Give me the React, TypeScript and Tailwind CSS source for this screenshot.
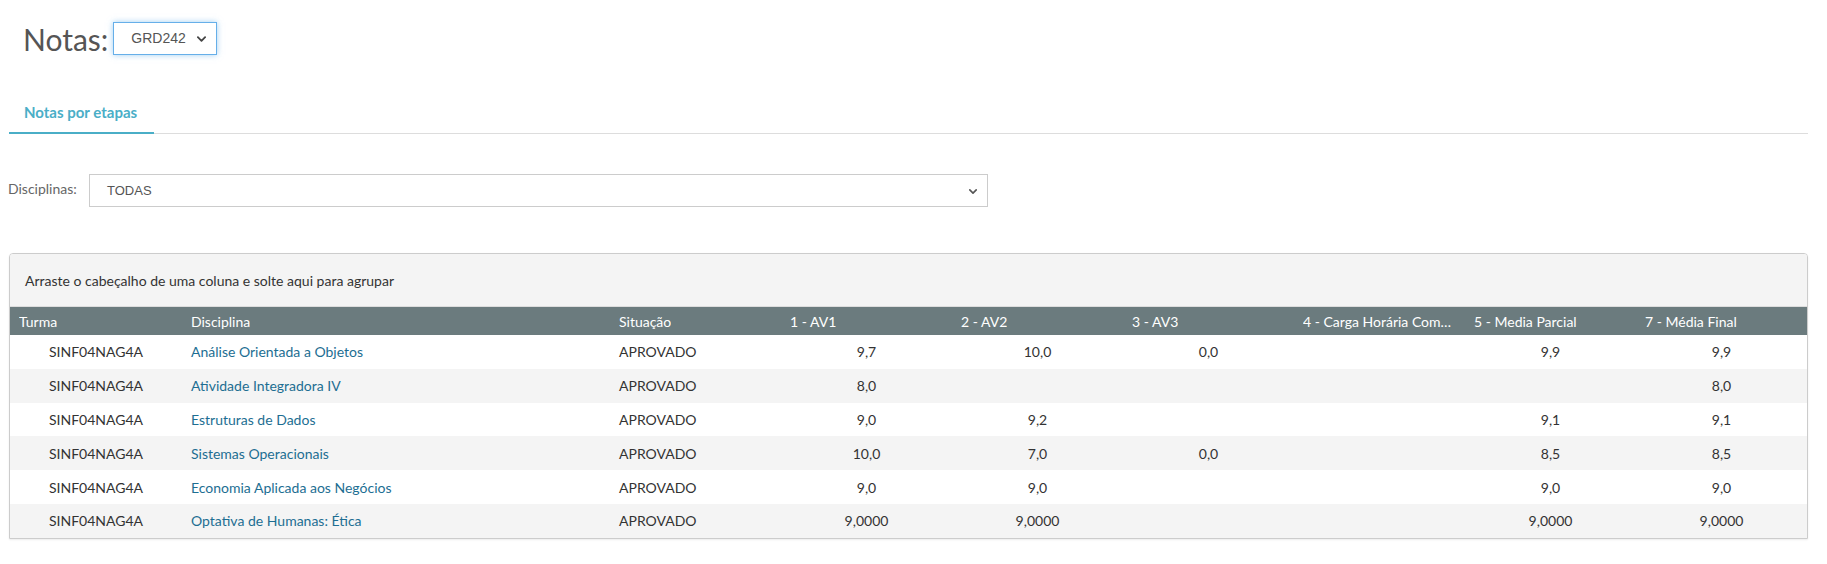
import React from "react";

const rows = [
  { turma: "SINF04NAG4A", disciplina: "Análise Orientada a Objetos", situacao: "APROVADO", av1: "9,7", av2: "10,0", av3: "0,0", carga: "", parcial: "9,9", final: "9,9" },
  { turma: "SINF04NAG4A", disciplina: "Atividade Integradora IV", situacao: "APROVADO", av1: "8,0", av2: "", av3: "", carga: "", parcial: "", final: "8,0" },
  { turma: "SINF04NAG4A", disciplina: "Estruturas de Dados", situacao: "APROVADO", av1: "9,0", av2: "9,2", av3: "", carga: "", parcial: "9,1", final: "9,1" },
  { turma: "SINF04NAG4A", disciplina: "Sistemas Operacionais", situacao: "APROVADO", av1: "10,0", av2: "7,0", av3: "0,0", carga: "", parcial: "8,5", final: "8,5" },
  { turma: "SINF04NAG4A", disciplina: "Economia Aplicada aos Negócios", situacao: "APROVADO", av1: "9,0", av2: "9,0", av3: "", carga: "", parcial: "9,0", final: "9,0" },
  { turma: "SINF04NAG4A", disciplina: "Optativa de Humanas: Ética", situacao: "APROVADO", av1: "9,0000", av2: "9,0000", av3: "", carga: "", parcial: "9,0000", final: "9,0000" },
];

const headers = [
  "Turma",
  "Disciplina",
  "Situação",
  "1 - AV1",
  "2 - AV2",
  "3 - AV3",
  "4 - Carga Horária Complementar",
  "5 - Media Parcial",
  "7 - Média Final",
];

function Chevron({ className }: { className?: string }) {
  return (
    <svg viewBox="0 0 10 6" className={className} fill="none">
      <path d="M1 1l4 4 4-4" stroke="currentColor" strokeWidth="2" strokeLinecap="round" strokeLinejoin="round" />
    </svg>
  );
}

export default function App() {
  return (
    <div className="w-[1827px] h-[564px] bg-white font-['Lato',sans-serif] text-[#333] overflow-hidden">
      {/* title */}
      <div className="flex items-center gap-[5px] pl-[23px] pt-[22px]">
        <h1 className="text-[30px] leading-none text-[#555] font-normal">Notas:</h1>
        <div className="relative w-[104px] h-[33px] border border-[#66afe9] bg-white shadow-[0_0_6px_rgba(102,175,233,0.6)] flex items-center pl-[17px]">
          <span className="font-['Liberation_Sans',sans-serif] text-[14px] text-[#555]">GRD242</span>
          <Chevron className="absolute right-[10px] top-[13px] w-[9px] h-[6px] text-[#444]" />
        </div>
      </div>

      {/* tabs */}
      <div className="ml-[9px] mr-[19px] mt-[37px] border-b border-[#ddd] flex">
        <div className="w-[145px] h-[42px] -mb-px border-b-2 border-[#4aaec7] flex items-center pl-[15px]">
          <span className="text-[15px] font-bold text-[#4aaec7]">Notas por etapas</span>
        </div>
      </div>

      {/* filter */}
      <div className="flex items-start pl-[8px] mt-[40px]">
        <span className="w-[81px] text-[14px] text-[#666] pt-[4px]">Disciplinas:</span>
        <div className="relative w-[899px] h-[33px] border border-[#ccc] bg-white flex items-center pl-[17px]">
          <span className="font-['Liberation_Sans',sans-serif] text-[13px] text-[#555]">TODAS</span>
          <Chevron className="absolute right-[10px] top-[14px] w-[8px] h-[5px] text-[#555]" />
        </div>
      </div>

      {/* grid */}
      <div className="ml-[9px] mr-[19px] mt-[46px] border border-[#ccc] rounded-t-[4px] shadow-[0_1px_2px_rgba(0,0,0,0.08)] overflow-hidden">
        <div className="h-[52px] bg-[#f4f4f4] flex items-center pl-[15px] text-[14px] text-[#333]">
          Arraste o cabeçalho de uma coluna e solte aqui para agrupar
        </div>
        <div className="grid grid-cols-[172px_428px_repeat(7,minmax(0,1fr))] h-[29px] bg-[#6b7b7e] border-t border-[#ddd] text-white text-[14px]">
          {headers.map((h) => (
            <div key={h} className="px-[9px] flex items-center overflow-hidden">
              <span className="truncate">{h}</span>
            </div>
          ))}
        </div>
        {rows.map((r, i) => (
          <div
            key={r.disciplina}
            className={`grid grid-cols-[172px_428px_repeat(7,minmax(0,1fr))] h-[33.8px] items-center text-[14px] ${
              i % 2 === 1 ? "bg-[#f4f4f4]" : "bg-white"
            }`}
          >
            <div className="text-center">{r.turma}</div>
            <div className="px-[9px] text-[#1d6e92]">{r.disciplina}</div>
            <div className="px-[9px]">{r.situacao}</div>
            <div className="text-center">{r.av1}</div>
            <div className="text-center">{r.av2}</div>
            <div className="text-center">{r.av3}</div>
            <div className="text-center">{r.carga}</div>
            <div className="text-center">{r.parcial}</div>
            <div className="text-center">{r.final}</div>
          </div>
        ))}
      </div>
    </div>
  );
}
